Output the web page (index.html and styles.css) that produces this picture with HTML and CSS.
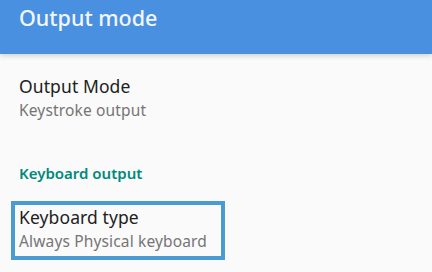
FILE: index.html
```html
<!DOCTYPE html>
<html>
<head>
<meta charset="utf-8">
<link rel="stylesheet" href="styles.css">
</head>
<body>
<header class="appbar"><h1 class="appbar-title">Output mode</h1></header>
<main class="prefs">
  <div class="pref pref-first">
    <div class="pref-title">Output Mode</div>
    <div class="pref-summary">Keystroke output</div>
  </div>
  <div class="category">Keyboard output</div>
  <div class="pref pref-highlight">
    <div class="pref-title">Keyboard type</div>
    <div class="pref-summary">Always Physical keyboard</div>
  </div>
</main>
</body>
</html>
```
FILE: styles.css
```css
html, body {
  margin: 0;
  padding: 0;
  background: #fafafa;
  font-family: "Noto Sans", Roboto, "Liberation Sans", sans-serif;
  width: 432px;
  height: 272px;
  overflow: hidden;
}
.appbar {
  position: relative;
  height: 54px;
  background: #4a90e0;
  box-sizing: border-box;
  padding: 6px 0 0 19px;
  box-shadow: 0 2px 5px rgba(0, 0, 0, 0.16);
}
.appbar-title {
  margin: 0;
  font-size: 21.5px;
  line-height: 24px;
  font-weight: 500;
  color: #f2f6fd;
}
.prefs {
  display: flex;
  flex-direction: column;
}
.pref {
  padding-left: 19px;
}
.pref-first {
  margin-top: 21px;
}
.pref-title {
  font-size: 17.5px;
  line-height: 23px;
  letter-spacing: 0.1px;
  color: #212121;
}
.pref-summary {
  font-size: 15.5px;
  line-height: 24px;
  letter-spacing: 0.15px;
  color: #757575;
}
.category {
  margin-top: 41px;
  padding-left: 19px;
  font-size: 15px;
  line-height: 20px;
  font-weight: 600;
  color: #00897b;
}
.pref-highlight {
  margin-top: 18px;
  margin-left: 11px;
  width: 214px;
  box-sizing: border-box;
  border: 4px solid #4b9bd3;
  padding: 1px 0 3px 4px;
}
```
